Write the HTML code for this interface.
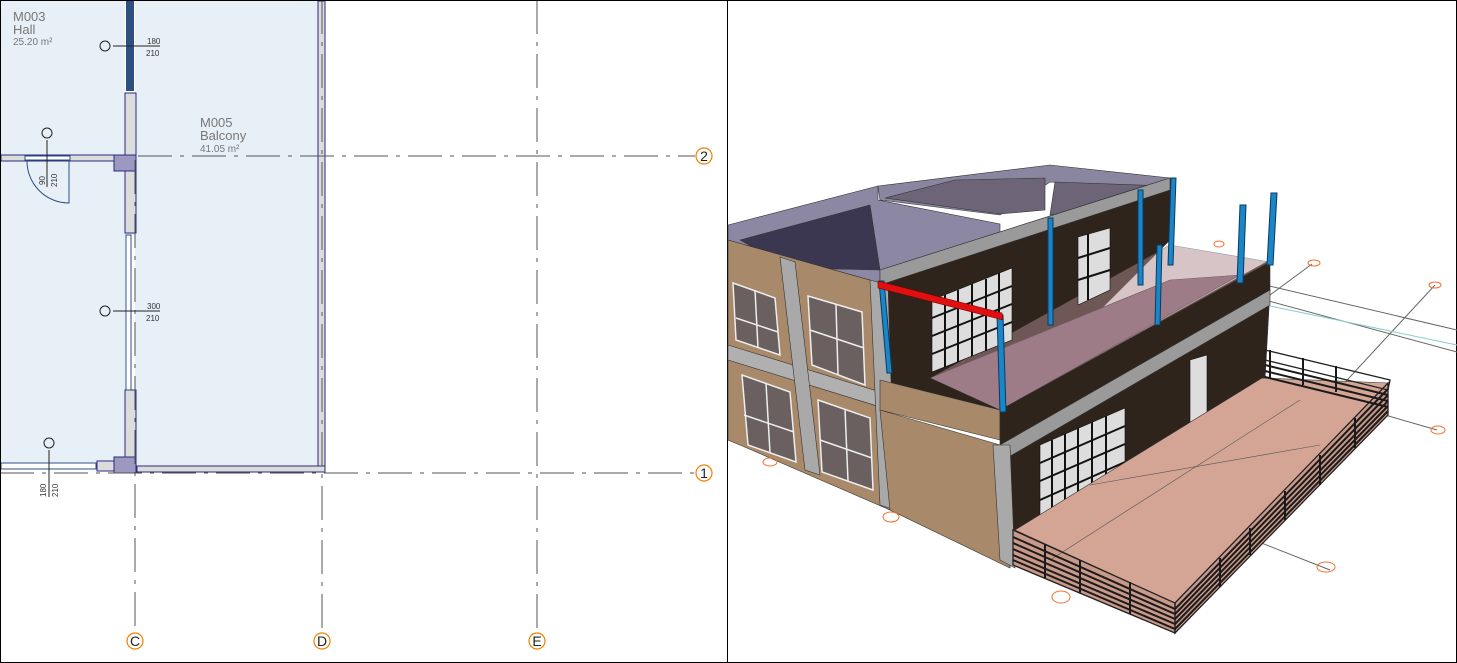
<!DOCTYPE html>
<html><head><meta charset="utf-8"><style>
html,body{margin:0;padding:0;background:#fff;width:1457px;height:663px;overflow:hidden}
svg{display:block}
text{font-family:"Liberation Sans",sans-serif}
</style></head><body>
<svg width="1457" height="663" viewBox="0 0 1457 663" xmlns="http://www.w3.org/2000/svg">
<rect x="0" y="0" width="1457" height="663" fill="#fff"/>
<!-- LEFT PLAN -->
<rect x="1" y="1" width="324" height="468" fill="#e8f0f7"/>
<rect x="125" y="1" width="10" height="95" fill="#fff"/>
<rect x="125" y="235" width="10" height="155" fill="#fff"/>
<rect x="126" y="1" width="8" height="90" fill="#2d5080"/>
<rect x="125" y="93" width="11" height="140" fill="#dcdcdc" stroke="#2a2a80" stroke-width="1"/>
<rect x="125" y="390" width="11" height="77" fill="#dcdcdc" stroke="#2a2a80" stroke-width="1"/>
<rect x="126" y="235" width="5" height="155" fill="#fff" stroke="#2d5080" stroke-width="1"/>
<rect x="318" y="1" width="7" height="470" fill="#dcdcdc" stroke="#2a2a80" stroke-width="1"/>
<rect x="137" y="466" width="188" height="6" fill="#dcdcdc" stroke="#2a2a80" stroke-width="1"/>
<rect x="1" y="155" width="113" height="6" fill="#dcdcdc" stroke="#2a2a80" stroke-width="1"/>
<rect x="25" y="156" width="45" height="4" fill="#fff" stroke="#2d5080" stroke-width="1"/>
<rect x="1" y="463" width="95" height="6" fill="#fff" stroke="#2d5080" stroke-width="1"/>
<rect x="97" y="461" width="17" height="10" fill="#dcdcdc" stroke="#2a2a80" stroke-width="1"/>
<rect x="114" y="155" width="22" height="16" fill="#9c98c0" stroke="#2a2a80" stroke-width="1"/>
<rect x="114" y="457" width="22" height="16" fill="#9c98c0" stroke="#2a2a80" stroke-width="1"/>
<path d="M27 160 A42 42 0 0 0 69 203 L69 160" fill="none" stroke="#2d5080" stroke-width="1"/>
<g stroke="#555" stroke-width="1" stroke-dasharray="34,8,4,8" fill="none">
<line x1="138" y1="156" x2="695" y2="156"/>
<line x1="0" y1="473" x2="695" y2="473"/>
<line x1="135" y1="160" x2="135" y2="632"/>
<line x1="322" y1="0" x2="322" y2="632"/>
<line x1="537" y1="0" x2="537" y2="632"/>
</g>
<g fill="#fff" stroke="#f08000" stroke-width="1.2">
<circle cx="704" cy="156" r="8"/><circle cx="704" cy="473" r="8"/>
<circle cx="135" cy="641" r="8"/><circle cx="322" cy="641" r="8"/><circle cx="537" cy="641" r="8"/>
</g>
<g font-size="14" fill="#222" text-anchor="middle">
<text x="704" y="161">2</text><text x="704" y="478">1</text>
<text x="135" y="646">C</text><text x="322" y="646">D</text><text x="537" y="646">E</text>
</g>
<g fill="#777">
<text x="13" y="21" font-size="13">M003</text>
<text x="13" y="34" font-size="13">Hall</text>
<text x="13" y="45" font-size="10">25.20 m²</text>
<text x="200" y="127" font-size="13">M005</text>
<text x="200" y="140" font-size="13">Balcony</text>
<text x="200" y="152" font-size="10">41.05 m²</text>
</g>
<g stroke="#222" fill="none" stroke-width="1">
<circle cx="105" cy="46" r="5"/><line x1="113" y1="46" x2="160" y2="46"/>
<circle cx="47" cy="133" r="5"/><line x1="47" y1="140" x2="47" y2="187"/>
<circle cx="105" cy="311" r="5"/><line x1="113" y1="311" x2="160" y2="311"/>
<circle cx="49" cy="443" r="5"/><line x1="49" y1="450" x2="49" y2="497"/>
</g>
<g fill="#333" font-size="8">
<text x="147" y="44">180</text><text x="146" y="56">210</text>
<text x="147" y="309">300</text><text x="146" y="321">210</text>
<text transform="translate(45,185) rotate(-90)">90</text>
<text transform="translate(57,187) rotate(-90)">210</text>
<text transform="translate(46,497) rotate(-90)">180</text>
<text transform="translate(58,497) rotate(-90)">210</text>
</g>
<line x1="727.5" y1="0" x2="727.5" y2="663" stroke="#000"/>
<rect x="0.5" y="0.5" width="1456" height="662" fill="none" stroke="#000"/>
<!-- RIGHT 3D -->
<g stroke="#333" stroke-width="0.6">
<g stroke="#666" stroke-width="1">
<line x1="1000" y1="440" x2="1330" y2="570"/>
<line x1="1265" y1="285" x2="1457" y2="330"/>
<line x1="1265" y1="300" x2="1457" y2="352"/>
<line x1="1190" y1="550" x2="1435" y2="285"/>
<line x1="1270" y1="295" x2="1312" y2="264"/>
<line x1="1385" y1="415" x2="1437" y2="430"/>
</g>
<line x1="1270" y1="306" x2="1457" y2="345" stroke="#8cc" stroke-width="1"/>
<polygon points="728,225 878,186 878,200 1000,224 1000,410 880,380 880,283 728,240" fill="#8c88a4"/>
<polygon points="740,240 870,205 880,270 790,268" fill="#3b3750"/>
<polygon points="878,186 1050,165 1170,178 1170,190 1050,182 1000,215 880,200" fill="#8a86a0"/>
<polygon points="885,198 1000,214 1045,210 1045,178 955,180" fill="#6e6478"/>
<polygon points="1055,182 1165,186 1090,210 1050,215" fill="#6e6478"/>
<polygon points="880,270 1170,178 1170,240 1000,410 880,380" fill="#2e241c"/>
<polygon points="880,270 1170,178 1170,190 880,285" fill="#9a9a9a"/>
<polygon points="728,240 880,283 890,510 740,445 728,440" fill="#a8896a"/>
<polygon points="728,345 890,395 890,410 728,360" fill="#b0b0b0"/>
<polygon points="780,257 795,262 820,475 805,470" fill="#a9a9a9"/>
<polygon points="870,280 888,285 895,510 880,505" fill="#a9a9a9"/>
<g fill="#6a6060" stroke="#eee" stroke-width="1.5">
<polygon points="733,283 775,298 780,355 736,340"/>
<polygon points="808,296 862,312 865,385 812,365"/>
<polygon points="742,375 790,392 796,462 748,445"/>
<polygon points="818,400 870,418 873,490 822,472"/>
</g>
<g stroke="#eee" stroke-width="1.5">
<line x1="755" y1="290" x2="758" y2="348"/><line x1="736" y1="318" x2="778" y2="332"/>
<line x1="836" y1="305" x2="838" y2="375"/><line x1="810" y1="330" x2="864" y2="348"/>
<line x1="766" y1="383" x2="770" y2="453"/><line x1="744" y1="415" x2="794" y2="432"/>
<line x1="845" y1="409" x2="848" y2="481"/><line x1="820" y1="440" x2="872" y2="458"/>
</g>
<polygon points="930,378 1170,280 1240,275 1000,410" fill="#8a6f80"/>
<polygon points="880,380 1000,410 1000,440 880,410" fill="#a8896a"/>
<polygon points="1000,410 1270,260 1270,290 1000,445" fill="#2e241c"/>
<polygon points="1170,245 1270,262 1000,410 930,378" fill="#b08a90" opacity="0.5"/>
<polygon points="880,410 1000,445 1010,568 890,510" fill="#a8896a"/>
<polygon points="1000,445 1270,290 1265,380 1010,545 1010,568" fill="#2e241c"/>
<polygon points="1000,445 1270,290 1270,305 1000,462" fill="#9a9a9a"/>
<polygon points="993,445 1010,445 1015,568 1000,560" fill="#a9a9a9"/>
<g fill="#ddd" stroke="#111">
<polygon points="932,300 1012,268 1012,340 932,372"/>
<polygon points="1078,237 1110,228 1110,290 1078,305"/>
<polygon points="1040,445 1125,408 1125,480 1040,520"/>
<polygon points="1190,360 1207,355 1207,420 1190,428"/>
</g>
<g stroke="#111" stroke-width="2">
<line x1="945" y1="295" x2="945" y2="367"/><line x1="958" y1="290" x2="958" y2="362"/><line x1="972" y1="284" x2="972" y2="356"/><line x1="986" y1="279" x2="986" y2="351"/><line x1="999" y1="273" x2="999" y2="345"/>
<line x1="932" y1="318" x2="1012" y2="286"/><line x1="932" y1="336" x2="1012" y2="304"/><line x1="932" y1="354" x2="1012" y2="322"/>
<line x1="1052" y1="440" x2="1052" y2="515"/><line x1="1065" y1="434" x2="1065" y2="509"/><line x1="1078" y1="428" x2="1078" y2="503"/><line x1="1092" y1="422" x2="1092" y2="497"/><line x1="1106" y1="416" x2="1106" y2="491"/>
<line x1="1040" y1="463" x2="1125" y2="426"/><line x1="1040" y1="481" x2="1125" y2="444"/><line x1="1040" y1="500" x2="1125" y2="462"/>
<line x1="1088" y1="234" x2="1088" y2="300"/><line x1="1078" y1="258" x2="1110" y2="248"/><line x1="1078" y1="280" x2="1110" y2="270"/>
</g>
<g stroke="#0a3a60" stroke-width="1" fill="#1a86c8">
<polygon points="879,281 884,281 892,373 887,373"/>
<polygon points="997,315 1003,315 1006,412 1000,412"/>
<polygon points="1048,218 1053,218 1053,325 1048,325"/>
<polygon points="1138,190 1143,190 1143,285 1138,285"/>
<polygon points="1171,178 1176,178 1173,265 1168,265"/>
<polygon points="1157,245 1162,245 1160,325 1155,325"/>
<polygon points="1240,205 1246,205 1243,283 1237,283"/>
<polygon points="1271,193 1277,193 1273,265 1267,265"/>
</g>
<polygon points="878,281 1002,313 1003,320 878,288" fill="#e01010" stroke="#700"/>
<!-- terrace -->
<polygon points="1013,530 1175,603 1175,633 1013,565" fill="#c89888"/>
<polygon points="1175,603 1388,383 1388,415 1175,633" fill="#c89888"/>
<polygon points="1015,530 1262,378 1388,383 1175,603" fill="#d4a595"/>
<line x1="1090" y1="485" x2="1320" y2="445" stroke="#555"/>
<line x1="1050" y1="560" x2="1300" y2="400" stroke="#555"/>
<g fill="none" stroke="#222" stroke-width="1.3">
<polygon points="1013,530 1175,603 1175,633 1013,565"/>
<polygon points="1175,603 1388,383 1388,415 1175,633"/>
<polygon points="1265,350 1390,380 1388,390 1265,360"/>
</g>
<g stroke="#1a1a1a" stroke-width="2">
<line x1="1013" y1="537" x2="1175" y2="609"/><line x1="1013" y1="543" x2="1175" y2="614"/><line x1="1013" y1="549" x2="1175" y2="619"/><line x1="1013" y1="555" x2="1175" y2="624"/><line x1="1013" y1="560" x2="1175" y2="629"/>
<line x1="1175" y1="609" x2="1388" y2="389"/><line x1="1175" y1="614" x2="1388" y2="395"/><line x1="1175" y1="619" x2="1388" y2="401"/><line x1="1175" y1="624" x2="1388" y2="406"/><line x1="1175" y1="629" x2="1388" y2="411"/>
<line x1="1265" y1="365" x2="1388" y2="395"/><line x1="1265" y1="371" x2="1388" y2="401"/><line x1="1265" y1="377" x2="1388" y2="407"/>
<line x1="1045" y1="544" x2="1045" y2="578"/><line x1="1080" y1="560" x2="1080" y2="593"/><line x1="1130" y1="582" x2="1130" y2="614"/>
<line x1="1220" y1="558" x2="1220" y2="587"/><line x1="1250" y1="528" x2="1250" y2="555"/><line x1="1285" y1="491" x2="1285" y2="520"/><line x1="1320" y1="455" x2="1320" y2="485"/><line x1="1355" y1="418" x2="1355" y2="448"/>
<line x1="1270" y1="350" x2="1270" y2="378"/><line x1="1303" y1="358" x2="1303" y2="385"/><line x1="1336" y1="366" x2="1336" y2="392"/>
</g>
</g>
<g fill="none" stroke="#f07030" stroke-width="1">
<ellipse cx="770" cy="462" rx="7" ry="4"/><ellipse cx="891" cy="517" rx="8" ry="5"/>
<ellipse cx="1061" cy="597" rx="9" ry="6"/><ellipse cx="1326" cy="567" rx="9" ry="5"/>
<ellipse cx="1438" cy="430" rx="7" ry="4"/><ellipse cx="1435" cy="285" rx="6" ry="3"/>
<ellipse cx="1314" cy="263" rx="6" ry="3"/><ellipse cx="1219" cy="244" rx="5" ry="3"/>
</g>
</svg>
</body></html>
